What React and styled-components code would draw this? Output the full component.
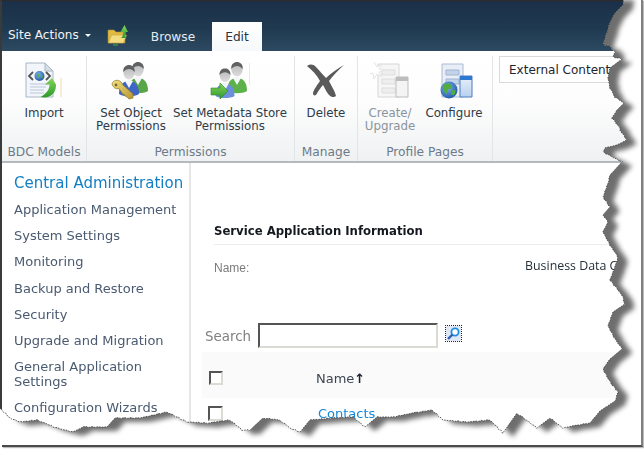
import React from 'react'
import styled, { createGlobalStyle } from 'styled-components'

const GlobalStyle = createGlobalStyle`
  html, body {
    margin: 0;
    padding: 0;
    background: #fff;
  }
  * { box-sizing: border-box; }
`

const Shot = styled.div`
  position: relative;
  width: 644px;
  height: 449px;
  overflow: hidden;
  background: #fff;
  font-family: "DejaVu Sans", Verdana, sans-serif;
`

const Page = styled.div`
  width: 644px;
  height: 449px;
  display: flex;
  flex-direction: column;
  border-top: 1px solid #2e2a28;
  border-left: 2px solid #3a3a3a;
  overflow: hidden;
  filter: blur(0.4px);
`

const TopBar = styled.div`
  height: 50px;
  flex: none;
  display: flex;
  align-items: flex-end;
  padding-left: 6px;
  background: linear-gradient(#1b3048, #1f3a50 55%, #2d4a62);
`

const SiteActions = styled.div`
  width: 99px;
  height: 30px;
  display: flex;
  align-items: flex-start;
  gap: 6px;
  color: #f2f5f8;
  font-size: 12px;
  line-height: 16px;
  padding-top: 6px;
`

const Caret = styled.span`
  width: 0;
  height: 0;
  margin-top: 7px;
  border-left: 3px solid transparent;
  border-right: 3px solid transparent;
  border-top: 3px solid #f2f5f8;
`

const FolderSlot = styled.div`
  width: 36px;
  height: 30px;
  padding-top: 3px;
`

const Tab = styled.div`
  height: ${p => (p.$active ? '29px' : '24px')};
  width: ${p => p.$w}px;
  margin-right: ${p => p.$gap || 0}px;
  text-align: center;
  font-size: 12.2px;
  line-height: 18px;
  padding-top: ${p => (p.$active ? '6px' : '1px')};
  color: ${p => (p.$active ? '#2a3440' : '#e4eaf0')};
  background: ${p => (p.$active ? 'linear-gradient(#fff, #f6f8fa)' : 'transparent')};
`

const Ribbon = styled.div`
  height: 112px;
  flex: none;
  display: flex;
  padding-top: 5px;
  background: linear-gradient(#fff, #fdfdfd 45%, #eff1f2);
  border-bottom: 2px solid #b4b9be;
`

const Group = styled.div`
  width: ${p => p.$w}px;
  flex: none;
  display: flex;
  flex-direction: column;
  border-right: 1px solid #e2e5e8;
`

const GroupButtons = styled.div`
  flex: 1;
  display: flex;
  justify-content: ${p => p.$justify || 'flex-start'};
  padding-left: ${p => p.$pad || 0}px;
  gap: ${p => p.$gap || 0}px;
`

const GroupLabel = styled.div`
  height: 22px;
  text-align: center;
  font-size: 12.2px;
  line-height: 26px;
  white-space: nowrap;
  color: #6c7a8a;
`

const RibbonButton = styled.div`
  width: ${p => p.$w}px;
  flex: none;
  display: flex;
  flex-direction: column;
  align-items: center;
  font-size: 11.8px;
  line-height: 13px;
  text-align: center;
  white-space: nowrap;
  color: ${p => (p.$disabled ? '#8a949e' : '#2f3b48')};
`

const IconSlot = styled.div`
  height: 51px;
  padding-top: 5px;
  flex: none;
`

const DropBox = styled.div`
  margin: 0 0 0 6px;
  width: 160px;
  height: 27px;
  background: #fff;
  border: 1px solid #d8dbde;
  padding-left: 9px;
  font-size: 12px;
  font-weight: 500;
  line-height: 27px;
  color: #1d2530;
  white-space: nowrap;
  overflow: hidden;
`

const Body = styled.div`
  flex: 1;
  display: flex;
  min-height: 0;
`

const Sidebar = styled.nav`
  width: 189px;
  flex: none;
  border-right: 2px solid #e6e6e6;
  padding: 10px 4px 0 12px;
  background: #fff;
`

const SideTitle = styled.div`
  font-size: 15px;
  line-height: 20px;
  color: #127fc4;
  white-space: nowrap;
  margin-bottom: 9px;
`

const SideList = styled.div`
  display: flex;
  flex-direction: column;
  gap: 11.2px;
`

const SideItem = styled.div`
  font-size: 13px;
  line-height: 15px;
  color: #4a5a70;
`

const Main = styled.main`
  flex: 1;
  padding: 59px 32px 0 11px;
`

const SectionTitle = styled.div`
  margin-left: 12px;
  padding-bottom: 4px;
  font-size: 11.7px;
  font-weight: 700;
  line-height: 18px;
  color: #15191f;
  border-bottom: 1px solid #ededed;
`

const InfoRow = styled.div`
  margin: 14px 0 0 12px;
  display: grid;
  grid-template-columns: 311px 1fr;
  height: 18px;
`

const InfoLabel = styled.div`
  font-family: "Liberation Sans", Arial, sans-serif;
  font-size: 12px;
  line-height: 18px;
  color: #7b7b7b;
`

const InfoValue = styled.div`
  font-family: "Open Sans", sans-serif;
  font-size: 12.4px;
  line-height: 14px;
  color: #26303a;
  white-space: nowrap;
`

const SearchRow = styled.div`
  margin: 46px 0 0 3px;
  height: 24px;
  display: flex;
  align-items: center;
`

const SearchLabel = styled.label`
  width: 53px;
  padding-top: 2px;
  font-size: 13.4px;
  color: #808080;
`

const SearchInput = styled.div`
  width: 180px;
  height: 25px;
  border: 2px solid;
  border-color: #555 #dcdad4 #dcdad4 #555;
  background: #fff;
`

const SearchButton = styled.div`
  width: 17px;
  height: 17px;
  margin: -4px 0 0 7px;
  border: 1px dotted #222;
  display: flex;
`

const HeaderRow = styled.div`
  margin-top: 5px;
  height: 46px;
  display: grid;
  grid-template-columns: 107px 1fr;
  align-items: center;
  background: #fafafa;
  padding: 6px 0 0 7px;
`

const DataRow = styled.div`
  height: 30px;
  display: grid;
  grid-template-columns: 110px 1fr;
  align-items: center;
  padding-left: 6px;
`

const CheckBox = styled.span`
  display: block;
  width: ${p => p.$s}px;
  height: ${p => p.$s}px;
  border: 2px solid;
  border-color: #555 #dcdad4 #dcdad4 #555;
  background: #fff;
`

const HeadName = styled.div`
  font-size: 13px;
  color: #3b4654;
`

const SortArrow = styled.span`
  font-weight: 700;
  color: #1c2430;
`

const ContactLink = styled.a`
  font-size: 13px;
  color: #1587d8;
  text-decoration: none;
`

const TornLayer = styled.svg`
  position: absolute;
  inset: 0;
  display: block;
  pointer-events: none;
`

const FrameLine = styled.div`
  position: absolute;
  left: 2px;
  top: 0;
  width: 641px;
  height: 447px;
  border-right: 2px solid #808080;
  border-bottom: 2px solid #4a4a4a;
  box-shadow: 1px 1px 1px #bbb;
  pointer-events: none;
`

const PERSON_HEAD = 'M0 -7c3.6 0 5.6 2.8 5.6 6.4S3 6.4 0 6.4-5.6 3-5.6-.6 -3.6-7 0-7z'

const Person = ({ x, y, scale = 1, body }) => (
  <g transform={`translate(${x} ${y}) scale(${scale})`}>
    <path d="M-10 21c0-9 4-13 10-13s10 4 10 13c-4 3-16 3-20 0z" fill={body} />
    <path d="M-4 8l4 7 4-7-4-1z" fill="#f3f6f8" />
    <path d={PERSON_HEAD} fill="url(#headGrey)" />
    <path d="M-5.8-1C-6-6-3-8 0-8s6 2 5.8 7C4-3 2-4 0-4s-4 1-5.8 3z" fill="#5f6163" />
  </g>
)

const Defs = () => (
  <svg width="0" height="0" style={{ position: 'absolute' }}>
    <defs>
      <linearGradient id="headGrey" x1="0" y1="0" x2="0" y2="1">
        <stop offset="0" stopColor="#b5b5b5" />
        <stop offset="1" stopColor="#dedede" />
      </linearGradient>
      <linearGradient id="arrowGreen" x1="0" y1="0" x2="0" y2="1">
        <stop offset="0" stopColor="#86d45a" />
        <stop offset="1" stopColor="#2c9a2c" />
      </linearGradient>
      <linearGradient id="keyGold" x1="0" y1="0" x2="1" y2="1">
        <stop offset="0" stopColor="#f2e088" />
        <stop offset="1" stopColor="#b8962c" />
      </linearGradient>
      <linearGradient id="paneBlue" x1="0" y1="0" x2="0" y2="1">
        <stop offset="0" stopColor="#e9f1fb" />
        <stop offset="1" stopColor="#b9d0ee" />
      </linearGradient>
      <radialGradient id="globe" cx="0.4" cy="0.35" r="0.7">
        <stop offset="0" stopColor="#7fb5ea" />
        <stop offset="1" stopColor="#1d55a5" />
      </radialGradient>
    </defs>
  </svg>
)

const ImportIcon = () => (
  <svg width="40" height="40" viewBox="0 0 40 40">
    <path d="M2 2h19l8 8v26H2z" fill="#f2f5fa" stroke="#aab6c6" />
    <path d="M21 2v8h8z" fill="#d6dee8" stroke="#aab6c6" />
    <path d="M6 23h18M6 26h16M6 29h14M6 32h14" stroke="#b9c7da" />
    <path d="M9 11l-4 4 4 4M22 11l4 4-4 4" fill="none" stroke="#555" strokeWidth="1.8" />
    <circle cx="15.5" cy="15" r="5" fill="url(#globe)" />
    <path d="M13 12.5c2 0 3 1 2.5 2.5s-2 1.5-2.5 3zM17 14l2 1-1 3z" fill="#59b043" />
    <path d="M37 24h-5v-.5L28 17l-7 6.500h4.500c0 5-3 9-9 12.500 9 2 15.500-3 15.500-12z" fill="url(#arrowGreen)" />
    <path d="M37 17v19" stroke="#f4d9b0" strokeWidth="1" />
  </svg>
)

const KeyPeopleIcon = () => (
  <svg width="40" height="40" viewBox="0 0 40 40">
    <Person x={27} y={9} body="#5aa548" />
    <Person x={18} y={12} body="#3f66c4" />
    <path d="M1 23c1-4 6-5 9-2 1 1 1.500 2 2 3l10 9v4l-4 1-2-2-2-1-1-2-1 .5-4-6c-3 1-6-1-7-4.500z" fill="url(#keyGold)" stroke="#8d7420" strokeWidth=".7" />
    <circle cx="5" cy="24" r="1.400" fill="#7c6a24" />
  </svg>
)

const ArrowPeopleIcon = () => (
  <svg width="40" height="40" viewBox="0 0 40 40">
    <path d="M39.500 2v22" stroke="#f8e6d2" />
    <Person x={27} y={9} body="#5db14a" />
    <Person x={15} y={15} scale={0.95} body="#6d8fdc" />
    <path d="M1 27h9v-5l8 8-8 8v-4H1z" fill="url(#arrowGreen)" stroke="#2b8a2b" strokeWidth=".6" />
  </svg>
)

// thin sketchy cross, heavier towards the middle
const DeleteIcon = () => (
  <svg width="40" height="40" viewBox="0 0 40 40">
    <path d="M1 5c3-2 6-2 9 1 4 4 7 8 10 11 5-5 11-9 18-13-6 5-11 11-15 16 3 6 6 10 7 15-2 2-5 1-7-1-3-3-4-7-6-10-3 3-5 7-7 10-2 1-3 0-3-2 1-4 5-9 7-12C11 14 6 9 1 5z" fill="#5a5a5a" />
  </svg>
)

const CreateIcon = () => (
  <svg width="40" height="40" viewBox="0 0 40 40">
    <path d="M8 3h21v33H8z" fill="#f6f6f6" stroke="#d6d6d6" />
    <path d="M12 9h13v5H12zM12 18h13v5H12zM12 27h13v5H12z" fill="#eee" stroke="#ddd" />
    <path d="M4 1l3 5 5-3-3 5 6 1-6 2 3 5-5-3-3 5-1-6-4 1" fill="#fff" stroke="#e4e4e4" />
    <path d="M26 16h12v20H26z" fill="#f4f4f4" stroke="#bdbdbd" />
    <path d="M26 16h12v4H26z" fill="#bdbdbd" />
  </svg>
)

const ConfigureIcon = () => (
  <svg width="40" height="40" viewBox="0 0 40 40">
    <path d="M8 3h21v33H8z" fill="#e9eef6" stroke="#a9bad2" />
    <path d="M12 9h13v5H12zM12 18h13v5H12z" fill="#c3d3ea" stroke="#9fb4d2" />
    <path d="M26 15h12v21H26z" fill="url(#paneBlue)" stroke="#4e7cc0" />
    <path d="M26 15h12v4H26z" fill="#2f78d2" />
    <circle cx="15" cy="29" r="8.500" fill="url(#globe)" />
    <path d="M9 24c3-2 6-2 8 0s0 4-2 4-1 4-3 5c-2-2-4-6-3-9zM18 29l4 .5-2 5-3-1z" fill="#4fae3f" />
  </svg>
)

const FolderIcon = () => (
  <svg width="22" height="22" viewBox="0 0 22 22">
    <path d="M1 6h6l2 2h9v11H1z" fill="#e3b93f" stroke="#a58a3a" strokeWidth=".6" />
    <path d="M1.500 19l3-8h15l-3 8z" fill="#f6dc80" stroke="#b89a45" strokeWidth=".5" />
    <path d="M21 8h-2.500v6h-5c2 0 2.500-3 2.500-6h-2.500L17.500 1z" fill="url(#arrowGreen)" />
    <path d="M6 21h5" stroke="#3ba53b" strokeWidth="1.200" />
  </svg>
)

const MagnifierIcon = () => (
  <svg width="15" height="15" viewBox="0 0 15 15">
    <rect width="15" height="15" fill="#dfe8f4" />
    <circle cx="9" cy="6" r="3.600" fill="#fff" stroke="#1d8fe0" strokeWidth="1.800" />
    <path d="M6.500 8.500L2 13" stroke="#2f5fb4" strokeWidth="2.400" />
  </svg>
)

// edge of the page, going down the right side and back along the bottom
const TEAR = [
  [624, -4], [623, 5], [615, 13], [610, 22], [607, 32], [603, 44], [610, 47], [615, 52], [613, 57], [622, 59],
  [610, 68], [608, 78], [610, 88], [615, 97], [624, 103], [617, 110], [612, 118], [618, 125], [622, 133], [627, 140],
  [617, 145], [605, 148], [603, 152], [622, 162], [610, 175], [608, 183], [603, 197], [610, 207], [603, 215], [608, 222],
  [603, 232], [610, 245], [618, 257], [615, 267], [610, 280], [622, 295], [625, 304], [613, 312], [608, 326], [615, 339],
  [622, 349], [610, 359], [603, 369], [610, 382], [618, 392], [615, 401], [600, 411], [590, 423], [577, 425], [563, 428],
  [550, 418], [537, 428], [517, 413], [503, 433], [490, 420], [467, 422], [443, 420], [432, 410], [413, 413], [393, 417],
  [377, 417], [365, 427], [353, 417], [333, 418], [310, 420], [300, 432], [290, 428], [280, 420], [263, 418], [250, 430],
  [242, 430], [230, 420], [207, 423], [187, 422], [167, 412], [140, 418], [115, 418], [107, 427], [83, 427], [73, 432],
  [57, 428], [37, 420], [20, 422], [10, 418], [2, 410], [-4, 404], [-4, -4],
]

const roughen = pts => {
  const out = []
  pts.forEach((p, i) => {
    const q = pts[(i + 1) % pts.length]
    const steps = Math.max(1, Math.round(Math.hypot(q[0] - p[0], q[1] - p[1]) / 3))
    for (let s = 0; s < steps; s++) {
      const t = s / steps
      const n = Math.sin(i * 12.9 + s * 78.2) * 0.45
      out.push([(p[0] + (q[0] - p[0]) * t + n).toFixed(1), (p[1] + (q[1] - p[1]) * t - n).toFixed(1)])
    }
  })
  return 'M' + out.map(o => o.join(' ')).join('L') + 'z'
}

const tearPath = roughen(TEAR)
const outerPath = 'M-20 -20H664V469H-20z' + tearPath

const TornEdge = () => (
  <TornLayer width="644" height="449" viewBox="0 0 644 449">
    <defs>
      <clipPath id="outsidePage">
        <path d={outerPath} clipRule="evenodd" />
      </clipPath>
      <filter id="tearBlur" x="-5%" y="-5%" width="110%" height="110%">
        <feGaussianBlur stdDeviation="2.8" />
      </filter>
    </defs>
    <path d={outerPath} fill="#fff" fillRule="evenodd" />
    <g clipPath="url(#outsidePage)">
      <path d={tearPath} transform="translate(10 4)" fill="#555" opacity="0.85" filter="url(#tearBlur)" />
    </g>
    <path d={tearPath} fill="none" stroke="#3a3a3a" strokeWidth="0.8" strokeDasharray="1.5 1.2" />
  </TornLayer>
)

const SIDE_ITEMS = [
  'Application Management',
  'System Settings',
  'Monitoring',
  'Backup and Restore',
  'Security',
  'Upgrade and Migration',
  'General Application Settings',
  'Configuration Wizards',
]

const App = () => (
  <Shot>
    <GlobalStyle />
    <Defs />
    <Page>
      <TopBar>
        <SiteActions>Site Actions <Caret /></SiteActions>
        <FolderSlot><FolderIcon /></FolderSlot>
        <Tab $w={60} $gap={9}>Browse</Tab>
        <Tab $active $w={50}>Edit</Tab>
      </TopBar>
      <Ribbon>
        <Group $w={85}>
          <GroupButtons $justify="center">
            <RibbonButton $w={80}>
              <IconSlot><ImportIcon /></IconSlot>
              Import
            </RibbonButton>
          </GroupButtons>
          <GroupLabel>BDC Models</GroupLabel>
        </Group>
        <Group $w={208}>
          <GroupButtons $pad={9} $gap={7}>
            <RibbonButton $w={70}>
              <IconSlot><KeyPeopleIcon /></IconSlot>
              Set Object<br />Permissions
            </RibbonButton>
            <RibbonButton $w={114}>
              <IconSlot><ArrowPeopleIcon /></IconSlot>
              Set Metadata Store<br />Permissions
            </RibbonButton>
          </GroupButtons>
          <GroupLabel>Permissions</GroupLabel>
        </Group>
        <Group $w={63}>
          <GroupButtons $justify="center">
            <RibbonButton $w={56}>
              <IconSlot><DeleteIcon /></IconSlot>
              Delete
            </RibbonButton>
          </GroupButtons>
          <GroupLabel>Manage</GroupLabel>
        </Group>
        <Group $w={135}>
          <GroupButtons $pad={7} $gap={9}>
            <RibbonButton $w={50} $disabled>
              <IconSlot><CreateIcon /></IconSlot>
              Create/<br />Upgrade
            </RibbonButton>
            <RibbonButton $w={60}>
              <IconSlot><ConfigureIcon /></IconSlot>
              Configure
            </RibbonButton>
          </GroupButtons>
          <GroupLabel>Profile Pages</GroupLabel>
        </Group>
        <DropBox>External Content</DropBox>
      </Ribbon>
      <Body>
        <Sidebar>
          <SideTitle>Central Administration</SideTitle>
          <SideList>
            {SIDE_ITEMS.map(item => <SideItem key={item}>{item}</SideItem>)}
          </SideList>
        </Sidebar>
        <Main>
          <SectionTitle>Service Application Information</SectionTitle>
          <InfoRow>
            <InfoLabel>Name:</InfoLabel>
            <InfoValue>Business Data C</InfoValue>
          </InfoRow>
          <SearchRow>
            <SearchLabel>Search</SearchLabel>
            <SearchInput />
            <SearchButton><MagnifierIcon /></SearchButton>
          </SearchRow>
          <HeaderRow>
            <CheckBox $s={14} />
            <HeadName>Name<SortArrow>↑</SortArrow></HeadName>
          </HeaderRow>
          <DataRow>
            <CheckBox $s={15} />
            <ContactLink href="#">Contacts</ContactLink>
          </DataRow>
        </Main>
      </Body>
    </Page>
    <TornEdge />
    <FrameLine />
  </Shot>
)

export default App
